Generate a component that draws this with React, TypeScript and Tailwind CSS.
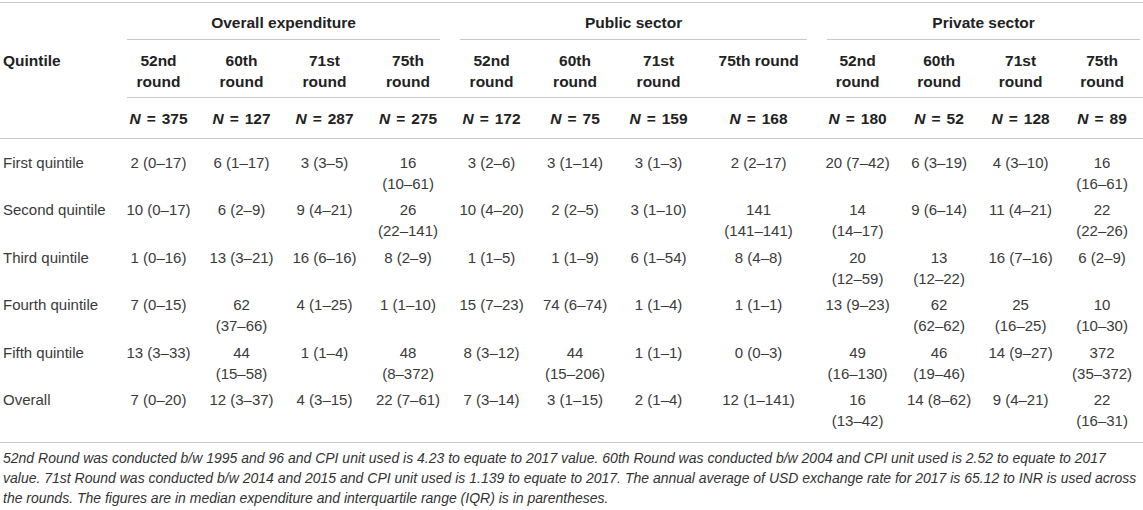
const groups = ["Overall expenditure", "Public sector", "Private sector"];

const rounds = [
  "52nd\nround", "60th\nround", "71st\nround", "75th\nround",
  "52nd\nround", "60th\nround", "71st\nround", "75th round",
  "52nd\nround", "60th\nround", "71st\nround", "75th\nround",
];

const counts = [375, 127, 287, 275, 172, 75, 159, 168, 180, 52, 128, 89];

const colWidths = [117, 83, 83, 83, 84, 83, 84, 83, 117, 81, 82, 81, 82];

// "\n" marks where the cell wraps in the source table
const rows: { label: string; cells: string[] }[] = [
  {
    label: "First quintile",
    cells: ["2 (0–17)", "6 (1–17)", "3 (3–5)", "16\n(10–61)", "3 (2–6)", "3 (1–14)", "3 (1–3)", "2 (2–17)", "20 (7–42)", "6 (3–19)", "4 (3–10)", "16\n(16–61)"],
  },
  {
    label: "Second quintile",
    cells: ["10 (0–17)", "6 (2–9)", "9 (4–21)", "26\n(22–141)", "10 (4–20)", "2 (2–5)", "3 (1–10)", "141\n(141–141)", "14\n(14–17)", "9 (6–14)", "11 (4–21)", "22\n(22–26)"],
  },
  {
    label: "Third quintile",
    cells: ["1 (0–16)", "13 (3–21)", "16 (6–16)", "8 (2–9)", "1 (1–5)", "1 (1–9)", "6 (1–54)", "8 (4–8)", "20\n(12–59)", "13\n(12–22)", "16 (7–16)", "6 (2–9)"],
  },
  {
    label: "Fourth quintile",
    cells: ["7 (0–15)", "62\n(37–66)", "4 (1–25)", "1 (1–10)", "15 (7–23)", "74 (6–74)", "1 (1–4)", "1 (1–1)", "13 (9–23)", "62\n(62–62)", "25\n(16–25)", "10\n(10–30)"],
  },
  {
    label: "Fifth quintile",
    cells: ["13 (3–33)", "44\n(15–58)", "1 (1–4)", "48\n(8–372)", "8 (3–12)", "44\n(15–206)", "1 (1–1)", "0 (0–3)", "49\n(16–130)", "46\n(19–46)", "14 (9–27)", "372\n(35–372)"],
  },
  {
    label: "Overall",
    cells: ["7 (0–20)", "12 (3–37)", "4 (3–15)", "22 (7–61)", "7 (3–14)", "3 (1–15)", "2 (1–4)", "12 (1–141)", "16\n(13–42)", "14 (8–62)", "9 (4–21)", "22\n(16–31)"],
  },
];

function Lines({ text }: { text: string }) {
  return (
    <>
      {text.split("\n").map((line, i) => (
        <div key={i} className="whitespace-nowrap">
          {line}
        </div>
      ))}
    </>
  );
}

export default function App() {
  return (
    <div className="w-[1143px] h-[510px] bg-white pt-[2px] font-['Liberation_Sans',Arial,sans-serif] text-[#3a3a3a]">
      <table className="w-[1143px] table-fixed border-collapse border-t border-[#c9c9c9] text-[15px] leading-[21px]">
        <colgroup>
          {colWidths.map((w, i) => (
            <col key={i} style={{ width: w }} />
          ))}
        </colgroup>
        <thead className="font-bold text-[#222] text-[15.5px]">
          <tr>
            <th className="p-0" />
            {groups.map((g, i) => (
              <th key={g} colSpan={4} className="p-0 font-bold">
                <div
                  className={
                    "h-[37px] pt-[8.5px] border-b border-[#c9c9c9] text-center ml-[10px] " +
                    (i === 2 ? "mr-[3px]" : "mr-[10px]")
                  }
                >
                  {g}
                </div>
              </th>
            ))}
          </tr>
          <tr>
            <th className="p-0 align-top text-left font-bold">
              <div className="h-[58px] pt-[9.5px] pl-[3px]">Quintile</div>
            </th>
            {rounds.map((r, i) => (
              <th key={i} className="p-0 align-top font-bold">
                <div
                  className={
                    "h-[58px] pt-[9.5px] border-b border-[#c9c9c9] text-center " +
                    (i === 0 ? "ml-[10px] pr-[10px]" : "px-[4px]")
                  }
                >
                  <Lines text={r} />
                </div>
              </th>
            ))}
          </tr>
          <tr className="border-b border-[#c9c9c9]">
            <th className="p-0" />
            {counts.map((n, i) => (
              <th key={i} className="px-0 pt-[9.5px] pb-[9.5px] text-center font-bold whitespace-nowrap">
                <span className="italic">N</span>
                <span className="mx-[6px]">=</span>
                {n}
              </th>
            ))}
          </tr>
        </thead>
        <tbody className="border-b border-[#c9c9c9]">
          {rows.map((row, ri) => {
            const pad =
              (ri === 0 ? "pt-[12.5px] " : "pt-[3px] ") +
              (ri === rows.length - 1 ? "pb-[10.5px]" : "pb-[2.5px]");
            return (
              <tr key={row.label}>
                <td className={"pl-[3px] pr-0 align-top whitespace-nowrap " + pad}>{row.label}</td>
                {row.cells.map((c, ci) => (
                  <td key={ci} className={"px-0 align-top text-center " + pad}>
                    <Lines text={c} />
                  </td>
                ))}
              </tr>
            );
          })}
        </tbody>
      </table>
      <p className="pl-[3px] pt-[5px] text-[14px] leading-[20px] italic text-[#333] whitespace-nowrap">
        52nd Round was conducted b/w 1995 and 96 and CPI unit used is 4.23 to equate to 2017 value. 60th Round was conducted b/w 2004 and CPI unit used is 2.52 to equate to 2017
        <br />
        value. 71st Round was conducted b/w 2014 and 2015 and CPI unit used is 1.139 to equate to 2017. The annual average of USD exchange rate for 2017 is 65.12 to INR is used across
        <br />
        the rounds. The figures are in median expenditure and interquartile range (IQR) is in parentheses.
      </p>
    </div>
  );
}
